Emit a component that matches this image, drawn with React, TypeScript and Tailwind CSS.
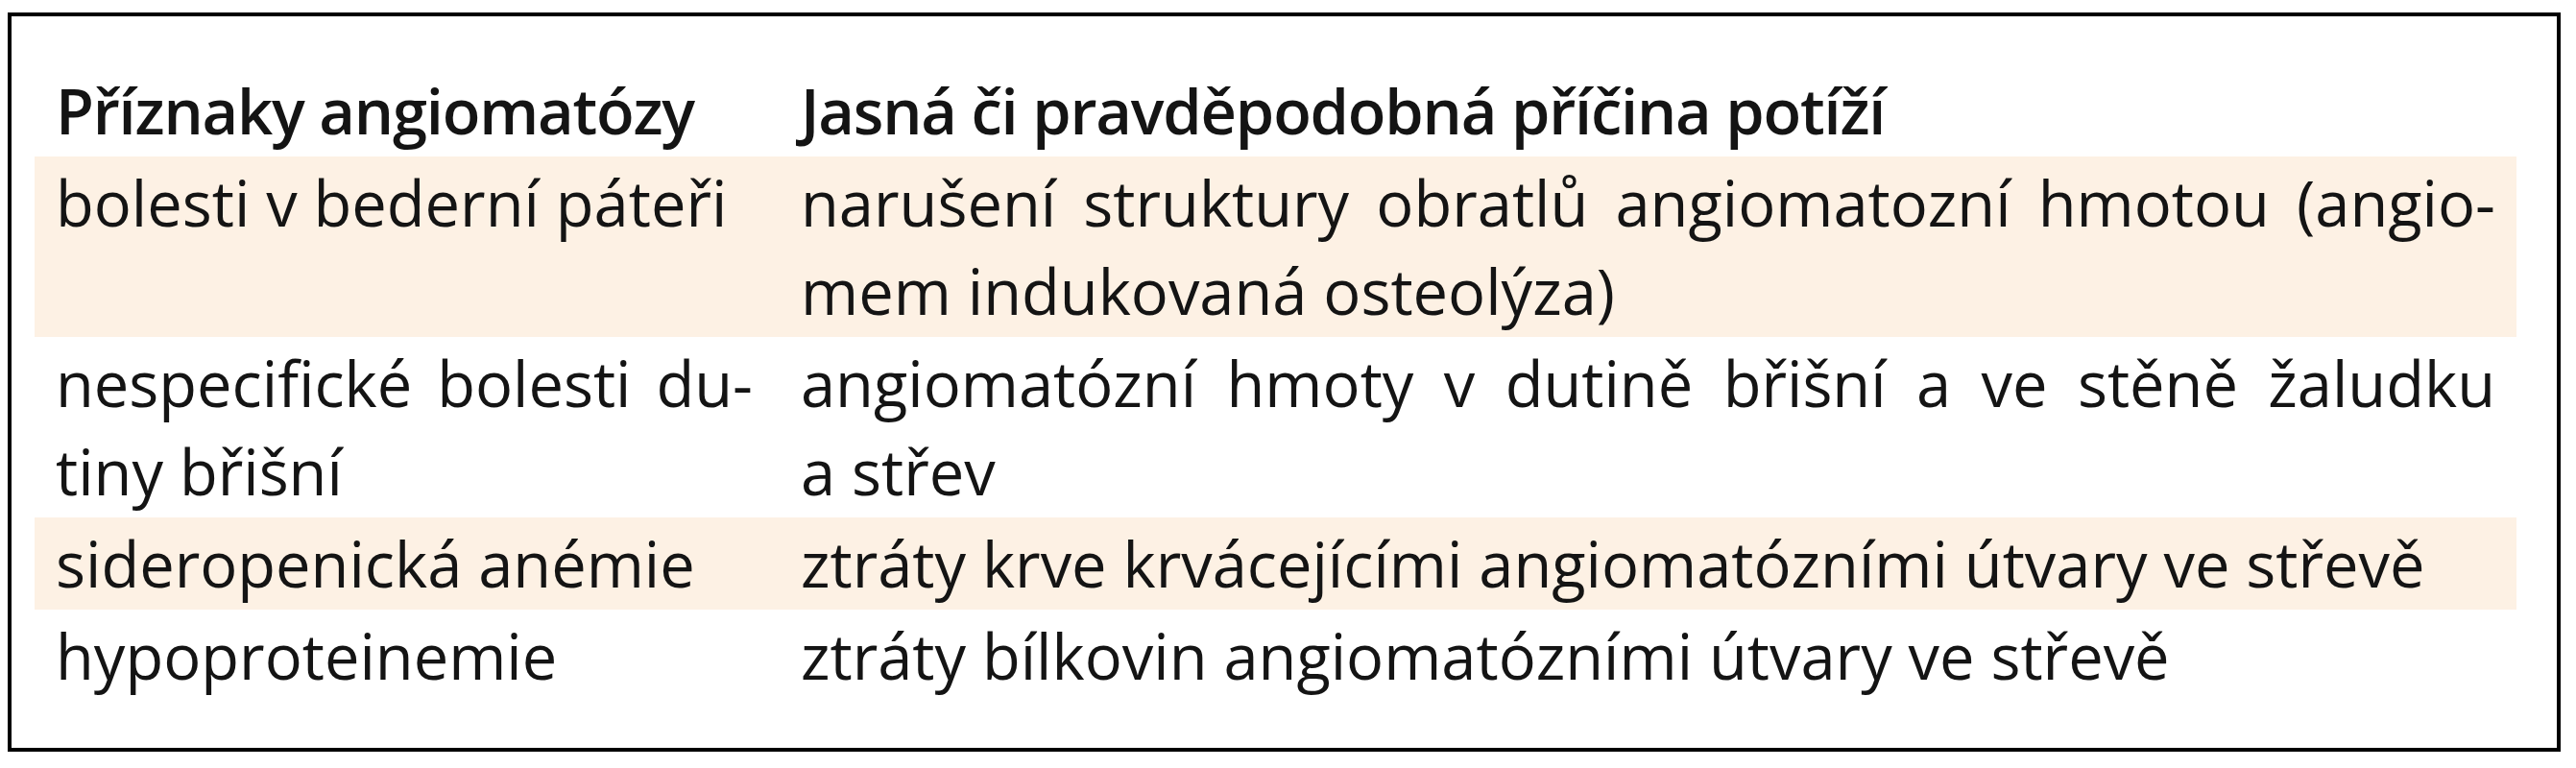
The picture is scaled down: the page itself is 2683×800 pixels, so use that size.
type Line = { text: string; justify?: boolean };

type Row = {
  symptom: Line[];
  cause: Line[];
  shaded?: boolean;
};

const rows: Row[] = [
  {
    shaded: true,
    symptom: [{ text: 'bolesti v bederní páteři' }],
    cause: [
      { text: 'narušení struktury obratlů angiomatozní hmotou (angio-', justify: true },
      { text: 'mem indukovaná osteolýza)' },
    ],
  },
  {
    symptom: [{ text: 'nespecifické bolesti du-', justify: true }, { text: 'tiny břišní' }],
    cause: [
      { text: 'angiomatózní hmoty v dutině břišní a ve stěně žaludku', justify: true },
      { text: 'a střev' },
    ],
  },
  {
    shaded: true,
    symptom: [{ text: 'sideropenická anémie' }],
    cause: [{ text: 'ztráty krve krvácejícími angiomatózními útvary ve střevě' }],
  },
  {
    symptom: [{ text: 'hypoproteinemie' }],
    cause: [{ text: 'ztráty bílkovin angiomatózními útvary ve střevě' }],
  },
];

function Lines({ lines }: { lines: Line[] }) {
  return (
    <>
      {lines.map((l, i) => (
        <div
          key={i}
          className={l.justify ? 'whitespace-nowrap text-justify [text-align-last:justify]' : 'whitespace-nowrap'}
        >
          {l.text}
        </div>
      ))}
    </>
  );
}

export default function App() {
  return (
    <div className="w-[2683px] h-[800px] bg-white pt-[13px] pl-[8px]">
      <div className="w-[2659px] h-[770px] border-4 border-black pt-[50px] pl-[24px] font-['Open_Sans',sans-serif] text-[#141414] text-[65px] leading-[92px]">
        <div className="w-[2585px] flex flex-col">
          <div className="grid grid-cols-[771px_1fr] pt-[2px] pb-[2px] font-semibold tracking-[-1.2px]">
            <div className="pl-[22px] whitespace-nowrap">Příznaky angiomatózy</div>
            <div className="pl-[27px] whitespace-nowrap">Jasná či pravděpodobná příčina potíží</div>
          </div>
          {rows.map((r, i) => (
            <div
              key={i}
              className={`grid grid-cols-[771px_1fr] pt-[2px] pb-[2px] ${r.shaded ? 'bg-[#fdf1e4]' : ''}`}
            >
              <div className="pl-[22px]">
                <div className="w-[726px]">
                  <Lines lines={r.symptom} />
                </div>
              </div>
              <div className="pl-[27px]">
                <div className="w-[1765px]">
                  <Lines lines={r.cause} />
                </div>
              </div>
            </div>
          ))}
        </div>
      </div>
    </div>
  );
}
